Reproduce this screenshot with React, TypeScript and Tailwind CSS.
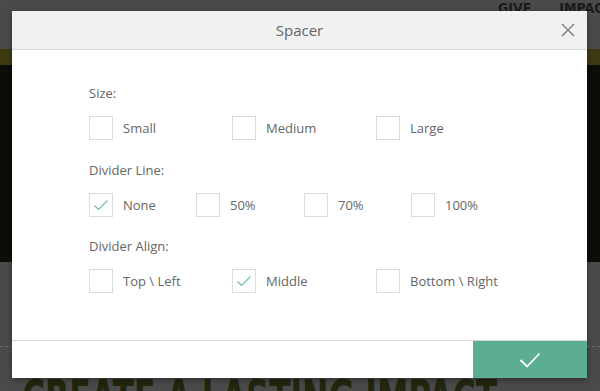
import React from "react";

function Box({ checked }: { checked?: boolean }) {
  return (
    <span className="flex h-[24px] w-[24px] shrink-0 items-center justify-center border border-[#dcdcdc] bg-white">
      {checked && (
        <svg width="16" height="12" viewBox="0 0 16 12" fill="none">
          <path d="M1.5 6.5 L5.5 10.5 L14.5 1.5" stroke="#6fbfa5" strokeWidth="1.2" />
        </svg>
      )}
    </span>
  );
}

function Opt({ label, checked, w }: { label: string; checked?: boolean; w: string }) {
  return (
    <div className={`flex items-center ${w}`}>
      <Box checked={checked} />
      <span className="ml-[10px] text-[13px] leading-[18px] text-[#666]">{label}</span>
    </div>
  );
}

export default function App() {
  return (
    <div
      className="relative h-[391px] w-[600px] overflow-hidden bg-[#4a4a4a]"
      style={{ fontFamily: '"Open Sans", "Noto Sans", sans-serif' }}
    >
      {/* page behind */}
      <div className="flex h-[49px] items-start justify-end gap-[28px]">
        <span
          className="mt-[1px] text-[14px] font-bold leading-[14px] text-[#1a1a1a]"
          style={{ fontFamily: '"DejaVu Sans Condensed", "DejaVu Sans", sans-serif' }}
        >
          GIVE
        </span>
        <span
          className="mt-[1px] mr-[-12px] text-[14px] font-bold leading-[14px] text-[#1a1a1a]"
          style={{ fontFamily: '"DejaVu Sans Condensed", "DejaVu Sans", sans-serif' }}
        >
          IMPACT
        </span>
      </div>
      <div className="h-[16px] bg-[#3d3a12]" />
      <div className="h-[197px] bg-[#0b0e08]" />
      <div className="relative h-[129px] bg-[#4a4a4a]">
        <div className="absolute left-0 right-0 top-[84px] border-t border-dashed border-[#666]" />
        <div
          className="absolute left-[22px] top-[111px] origin-left scale-x-[0.7] whitespace-nowrap text-[50px] font-bold leading-[50px] text-[#23260e]"
          style={{ fontFamily: '"DejaVu Sans Condensed", "DejaVu Sans", sans-serif' }}
        >
          CREATE A LASTING IMPACT
        </div>
      </div>

      {/* modal */}
      <div className="absolute left-[12px] top-[11px] flex h-[367px] w-[575px] flex-col bg-white shadow-[0_2px_6px_rgba(0,0,0,0.35)]">
        <div className="relative flex h-[39px] shrink-0 items-center justify-center border-b border-[#d9d9d9] bg-[#f1f1f1]">
          <span className="text-[15px] text-[#666]">Spacer</span>
          <svg className="absolute right-[12px] top-[12px]" width="14" height="14" viewBox="0 0 14 14" fill="none">
            <path d="M1 1 L13 13 M13 1 L1 13" stroke="#777" strokeWidth="1.3" />
          </svg>
        </div>
        <div className="flex flex-1 flex-col pl-[77px] pt-[34px]">
          <div className="text-[13px] leading-[18px] text-[#666]">Size:</div>
          <div className="mt-[14px] flex">
            <Opt label="Small" w="w-[143px]" />
            <Opt label="Medium" w="w-[144px]" />
            <Opt label="Large" w="w-[143px]" />
          </div>
          <div className="mt-[21px] text-[13px] leading-[18px] text-[#666]">Divider Line:</div>
          <div className="mt-[14px] flex">
            <Opt label="None" checked w="w-[107px]" />
            <Opt label="50%" w="w-[108px]" />
            <Opt label="70%" w="w-[107px]" />
            <Opt label="100%" w="w-[107px]" />
          </div>
          <div className="mt-[20px] text-[13px] leading-[18px] text-[#666]">Divider Align:</div>
          <div className="mt-[14px] flex">
            <Opt label="Top \ Left" w="w-[143px]" />
            <Opt label="Middle" checked w="w-[144px]" />
            <Opt label="Bottom \ Right" w="w-[143px]" />
          </div>
        </div>
        <div className="flex h-[38px] shrink-0 justify-end border-t border-[#d9d9d9]">
          <button className="flex w-[114px] items-center justify-center bg-[#5bad94]">
            <svg width="22" height="16" viewBox="0 0 22 16" fill="none">
              <path d="M1.5 8 L8 14.5 L20.5 1.5" stroke="#fff" strokeWidth="1.8" />
            </svg>
          </button>
        </div>
      </div>
    </div>
  );
}
